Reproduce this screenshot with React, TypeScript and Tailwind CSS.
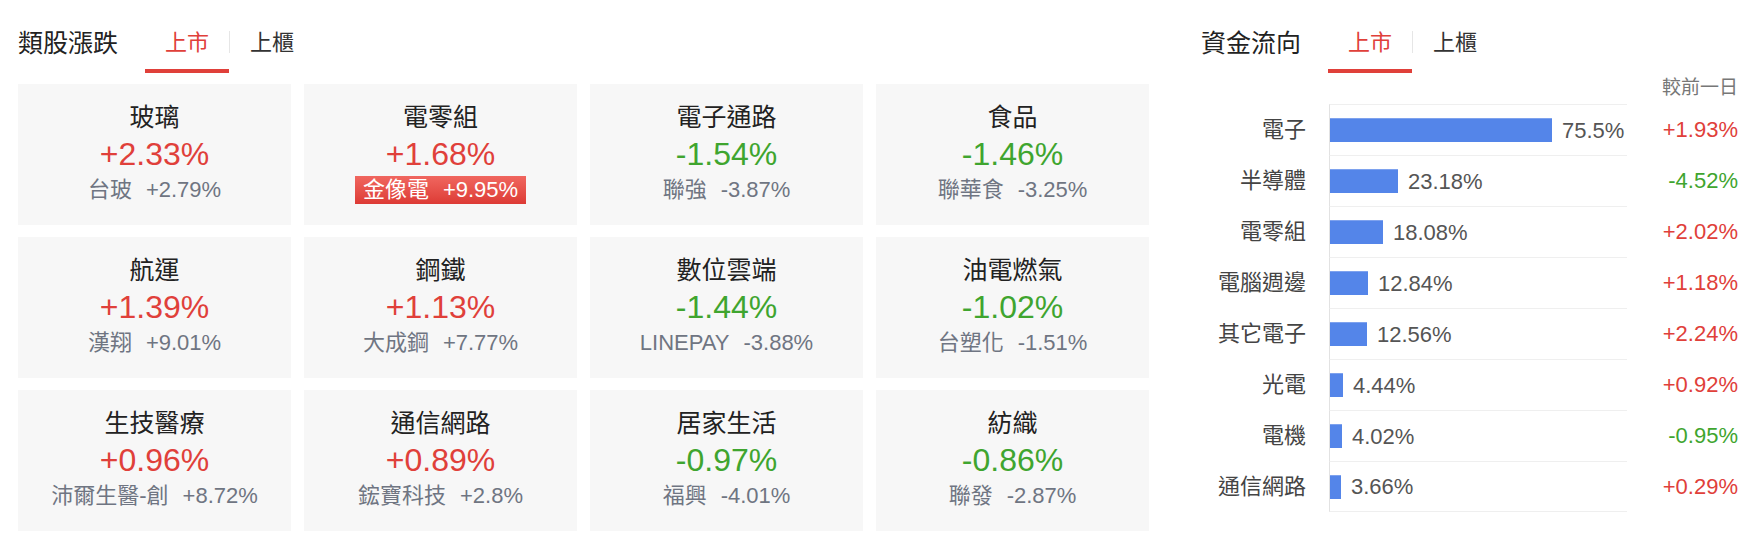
const RED = 'text-[#e0403a]';
const GREEN = 'text-[#3fa52f]';

type Sector = {
  name: string;
  change: number;
  stock: string;
  stockChange: string;
  hot?: boolean;
};

const sectors: Sector[] = [
  { name: '玻璃', change: 2.33, stock: '台玻', stockChange: '+2.79%' },
  { name: '電零組', change: 1.68, stock: '金像電', stockChange: '+9.95%', hot: true },
  { name: '電子通路', change: -1.54, stock: '聯強', stockChange: '-3.87%' },
  { name: '食品', change: -1.46, stock: '聯華食', stockChange: '-3.25%' },
  { name: '航運', change: 1.39, stock: '漢翔', stockChange: '+9.01%' },
  { name: '鋼鐵', change: 1.13, stock: '大成鋼', stockChange: '+7.77%' },
  { name: '數位雲端', change: -1.44, stock: 'LINEPAY', stockChange: '-3.88%' },
  { name: '油電燃氣', change: -1.02, stock: '台塑化', stockChange: '-1.51%' },
  { name: '生技醫療', change: 0.96, stock: '沛爾生醫-創', stockChange: '+8.72%' },
  { name: '通信網路', change: 0.89, stock: '鋐寶科技', stockChange: '+2.8%' },
  { name: '居家生活', change: -0.97, stock: '福興', stockChange: '-4.01%' },
  { name: '紡織', change: -0.86, stock: '聯發', stockChange: '-2.87%' },
];

const flows = [
  { name: '電子', share: '75.5%', pct: 75.5, diff: '+1.93%' },
  { name: '半導體', share: '23.18%', pct: 23.18, diff: '-4.52%' },
  { name: '電零組', share: '18.08%', pct: 18.08, diff: '+2.02%' },
  { name: '電腦週邊', share: '12.84%', pct: 12.84, diff: '+1.18%' },
  { name: '其它電子', share: '12.56%', pct: 12.56, diff: '+2.24%' },
  { name: '光電', share: '4.44%', pct: 4.44, diff: '+0.92%' },
  { name: '電機', share: '4.02%', pct: 4.02, diff: '-0.95%' },
  { name: '通信網路', share: '3.66%', pct: 3.66, diff: '+0.29%' },
];

function fmt(n: number) {
  return (n > 0 ? '+' : '') + n.toFixed(2) + '%';
}

function Header({ title }: { title: string }) {
  return (
    <div className="flex items-start pt-[28px]">
      <h2 className="text-[25px] leading-[30px] text-[#222]">{title}</h2>
      <div className="ml-[27px] flex items-start">
        <button className="px-[20px] pb-[11px] border-b-4 border-[#e0403a] text-[22px] leading-[30px] text-[#e0403a]">
          上市
        </button>
        <span className="mt-[3px] h-[22px] w-px bg-[#e6e6e6]" />
        <button className="px-[20px] pb-[11px] border-b-4 border-transparent text-[22px] leading-[30px] text-[#333]">
          上櫃
        </button>
      </div>
    </div>
  );
}

function SectorCard({ s }: { s: Sector }) {
  const color = s.change >= 0 ? RED : GREEN;
  return (
    <div className="h-[141px] pb-[3px] bg-[#f7f7f7] flex flex-col items-center justify-center">
      <div className="text-[25px] leading-[32px] text-[#222]">{s.name}</div>
      <div className={`text-[32px] leading-[42px] ${color}`}>{fmt(s.change)}</div>
      <div className="h-[30px] flex items-center">
        {s.hot ? (
          <span className="h-[28px] px-[8px] flex items-center gap-[14px] bg-gradient-to-b from-[#f0665f] to-[#dd3a35] text-white text-[22px] leading-[28px]">
            <span>{s.stock}</span>
            <span>{s.stockChange}</span>
          </span>
        ) : (
          <span className="flex items-center gap-[14px] text-[22px] leading-[30px] text-[#6f7582]">
            <span>{s.stock}</span>
            <span>{s.stockChange}</span>
          </span>
        )}
      </div>
    </div>
  );
}

export default function App() {
  return (
    <div
      className="w-[1762px] h-[538px] bg-white flex"
      style={{ fontFamily: '"Liberation Sans", "Noto Sans CJK TC", sans-serif' }}
    >
      {/* sector movers */}
      <section className="ml-[18px] w-[1131px]">
        <Header title="類股漲跌" />
        <div className="mt-[11px] grid grid-cols-4 gap-x-[13px] gap-y-[12px]">
          {sectors.map((s) => (
            <SectorCard key={s.name} s={s} />
          ))}
        </div>
      </section>

      {/* money flow */}
      <section className="ml-[52px] w-[537px]">
        <Header title="資金流向" />
        <div className="h-[31px] flex items-center justify-end text-[19px] text-[#777]">較前一日</div>
        <div>
          {flows.map((f, i) => (
            <div key={f.name} className="flex items-center h-[51px]">
              <div className="w-[105px] text-right text-[22px] text-[#444]">{f.name}</div>
              <div
                className={`ml-[23px] w-[298px] h-full flex items-center border-l border-l-[#e2e2e2] border-t border-t-[#efefef] ${
                  i === flows.length - 1 ? 'border-b border-b-[#efefef]' : ''
                }`}
              >
                <div
                  className="h-[24px] bg-[#5485e9] border-t border-[#7ea2ee]"
                  style={{ width: Math.max(10, Math.round(f.pct * 2.94)) }}
                />
                <span className="ml-[10px] text-[22px] text-[#555]">{f.share}</span>
              </div>
              <div className={`flex-1 text-right text-[22px] ${f.diff.startsWith('+') ? RED : GREEN}`}>
                {f.diff}
              </div>
            </div>
          ))}
        </div>
      </section>
    </div>
  );
}
